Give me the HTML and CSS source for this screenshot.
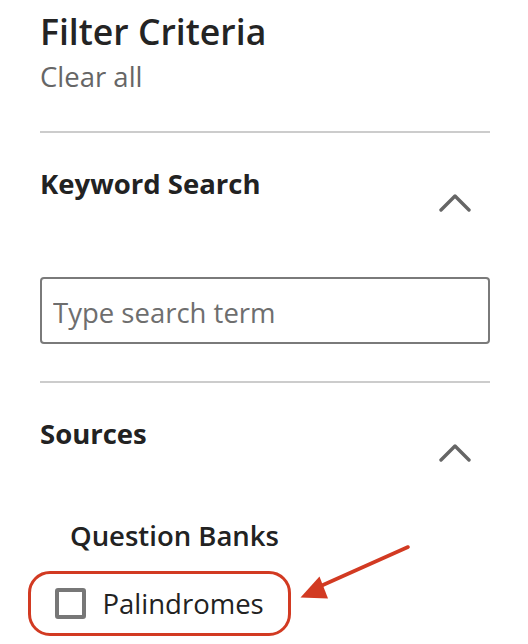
FILE: index.html
```html
<!DOCTYPE html>
<html lang="en">
<head>
<meta charset="utf-8">
<title>Filter Criteria</title>
<link rel="stylesheet" href="styles.css">
</head>
<body>
<div class="panel">
  <h1 class="title">Filter Criteria</h1>
  <a class="clear" href="#">Clear all</a>

  <section class="section">
    <div class="section-head">
      <h2 class="section-title">Keyword Search</h2>
      <svg class="chevron" width="32" height="19" viewBox="0 0 32 19"><path d="M2 17 L16 3 L30 17" fill="none" stroke="#666" stroke-width="3.4" stroke-linecap="round" stroke-linejoin="round"/></svg>
    </div>
    <input class="search" type="text" placeholder="Type search term">
  </section>

  <section class="section">
    <div class="section-head">
      <h2 class="section-title">Sources</h2>
      <svg class="chevron" width="32" height="19" viewBox="0 0 32 19"><path d="M2 17 L16 3 L30 17" fill="none" stroke="#666" stroke-width="3.4" stroke-linecap="round" stroke-linejoin="round"/></svg>
    </div>
    <h3 class="group-title">Question Banks</h3>
    <div class="highlight">
      <label class="option">
        <span class="box"></span>
        <span class="option-text">Palindromes</span>
      </label>
    </div>
  </section>

  <svg class="arrow" width="528" height="644" viewBox="0 0 528 644">
    <line x1="408" y1="547" x2="314" y2="589" stroke="#d23a22" stroke-width="3.6" stroke-linecap="round"/>
    <polygon points="300.5,597.5 319.5,576.5 328,598.5" fill="#d23a22"/>
  </svg>
</div>
</body>
</html>
```

FILE: styles.css
```css
* { box-sizing: border-box; }
html, body { margin: 0; padding: 0; background: #fff; }
body {
  font-family: "Open Sans", "Liberation Sans", sans-serif;
  color: #222;
}
.panel {
  position: relative;
  width: 528px;
  height: 644px;
  padding: 9px 38px 0 40px;
  overflow: hidden;
}
.title {
  margin: 0;
  font-size: 35.6px;
  line-height: 44px;
  font-weight: 600;
  color: #242424;
}
.clear {
  display: block;
  margin-top: 5px;
  font-size: 27.5px;
  line-height: 38px;
  color: #666;
  text-decoration: none;
}
.section {
  border-top: 2px solid #cccccc;
  width: 450px;
  margin-top: 35px;
  padding-top: 32px;
}
.section + .section { margin-top: 37px; }
.section-head {
  display: flex;
  justify-content: space-between;
  align-items: flex-start;
}
.section-title {
  margin: 0;
  font-size: 27.5px;
  line-height: 38px;
  font-weight: 700;
  color: #222;
}
.chevron {
  margin-top: 28px;
  margin-right: 19px;
}
.search {
  display: block;
  width: 450px;
  height: 67px;
  margin-top: 65px;
  padding: 4px 10px 0 11px;
  border: 2px solid #7a7a7a;
  border-radius: 4px;
  font-family: "Open Sans", "Liberation Sans", sans-serif;
  font-size: 27.5px;
  color: #222;
  outline: none;
}
.search::placeholder { color: #6e6e6e; opacity: 1; }
.group-title {
  margin: 55px 0 0 30px;
  font-size: 27.5px;
  line-height: 38px;
  font-weight: 600;
  color: #222;
}
.highlight {
  display: inline-flex;
  margin: 16px 0 0 -12px;
  padding: 10.5px 24.5px 10.5px 23.5px;
  border: 3.5px solid #d23a22;
  border-radius: 22px;
}
.option {
  display: flex;
  align-items: center;
  gap: 17px;
}
.box {
  width: 31px;
  height: 31px;
  border: 4px solid #777;
  border-radius: 3px;
}
.option-text {
  font-size: 27.5px;
  line-height: 38px;
  color: #222;
}
.arrow {
  position: absolute;
  left: 0;
  top: 0;
  pointer-events: none;
}
```
